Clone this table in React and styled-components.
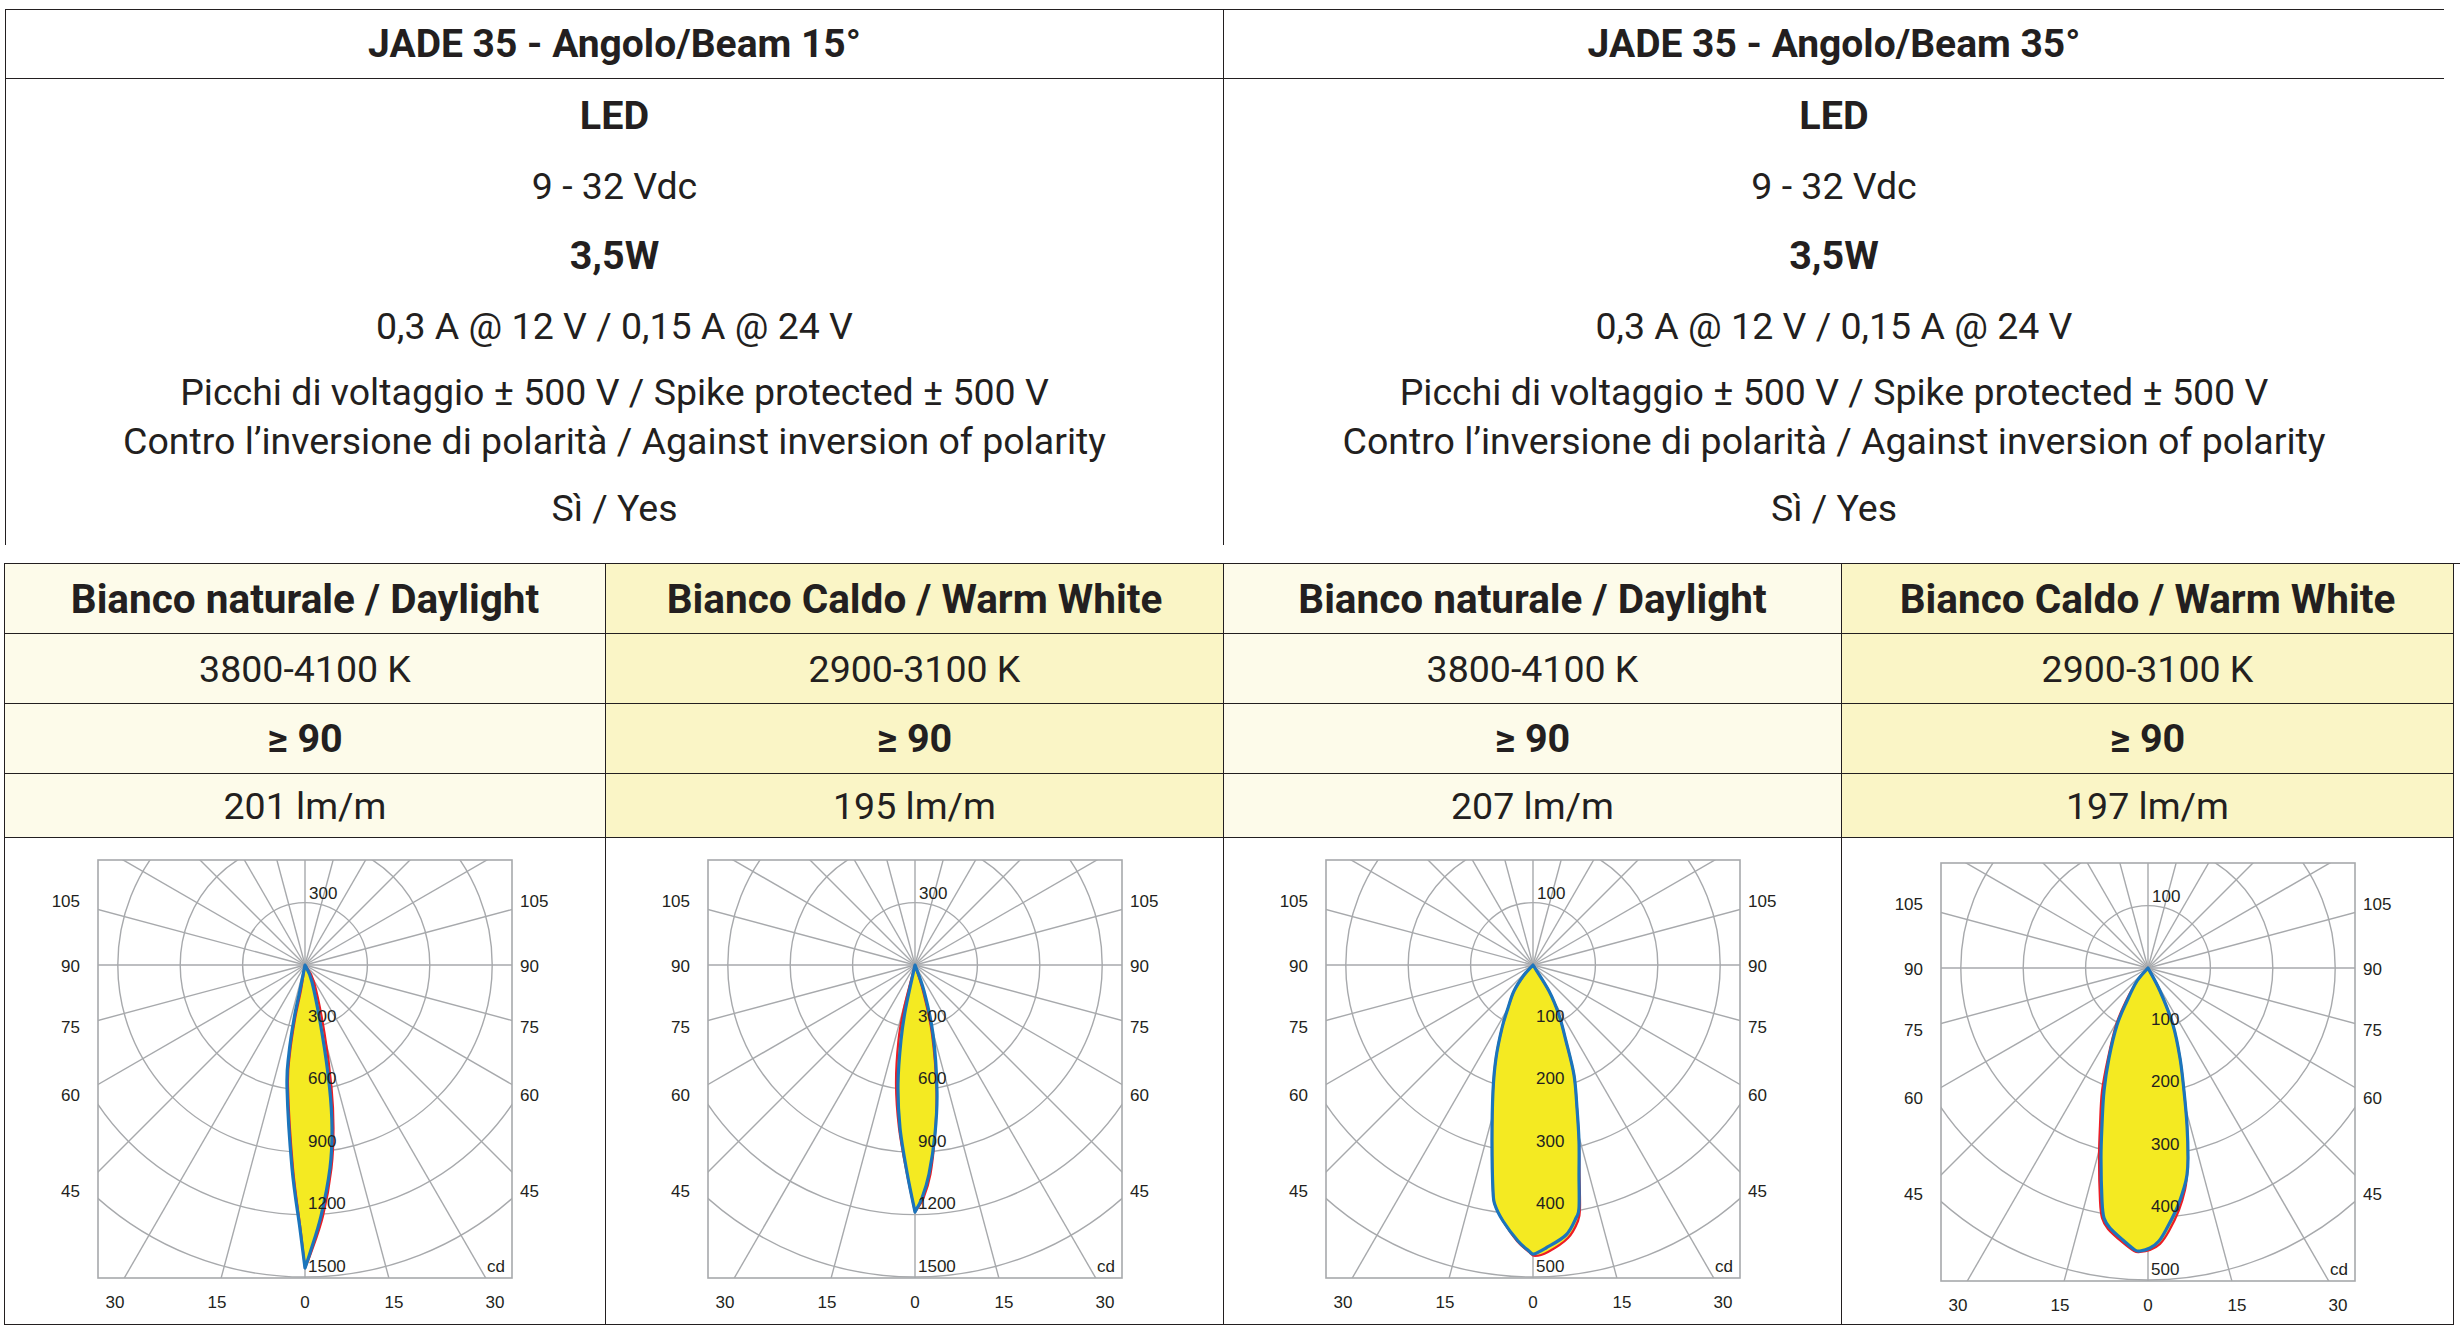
import React from 'react';
import styled, { createGlobalStyle } from 'styled-components';

const INK = '#231f20';
const GRID = '#a7a9ac';

const GlobalStyle = createGlobalStyle`
  body {
    margin: 0;
    background: #fff;
    color: ${INK};
    font-family: Roboto, 'Liberation Sans', sans-serif;
  }
`;

const Page = styled.div`
  width: 2460px;
  padding-top: 9px;
`;

const SpecTable = styled.div`
  display: grid;
  grid-template-columns: 1218px 1221px;
  margin-left: 5px;
`;

const SpecColumn = styled.section`
  display: flex;
  flex-direction: column;
  border-left: 1.5px solid ${INK};
  padding-bottom: 2px;
`;

const SpecTitle = styled.h2`
  margin: 0 0 2px;
  height: 70px;
  box-sizing: border-box;
  border-top: 1.5px solid ${INK};
  border-bottom: 1.5px solid ${INK};
  display: flex;
  align-items: center;
  justify-content: center;
  font-size: 39px;
  font-weight: 700;
`;

const SpecLine = styled.p`
  margin: 0;
  height: 70px;
  line-height: 70px;
  text-align: center;
  font-size: ${(p) => (p.$bold ? 39.5 : 37.5)}px;
  font-weight: ${(p) => (p.$bold ? 700 : 400)};
`;

const SpecPair = styled.div`
  padding: 7px 0;
  line-height: 49px;
  text-align: center;
  font-size: 37.5px;
`;

const ColorTable = styled.div`
  display: grid;
  grid-template-columns: 601px 618px 618px 612px;
  grid-template-rows: 70px 70px 70px 64px 487px;
  margin: 18px 0 0 4px;
  border-top: 1.5px solid ${INK};
  border-left: 1.5px solid ${INK};
`;

const ColorCell = styled.div`
  box-sizing: border-box;
  border-right: 1.5px solid ${INK};
  border-bottom: 1.5px solid ${INK};
  background: ${(p) => (p.$warm ? '#faf5c6' : '#fdfbea')};
  display: flex;
  align-items: center;
  justify-content: center;
  font-size: ${(p) => p.$size || 37.5}px;
  font-weight: ${(p) => (p.$bold ? 700 : 400)};
`;

const ChartCell = styled.div`
  box-sizing: border-box;
  border-right: 1.5px solid ${INK};
  border-bottom: 1.5px solid ${INK};
  display: flex;
  justify-content: center;
  padding-top: ${(p) => 10 + (p.$shift || 0)}px;
`;

const specs = [
  { title: 'JADE 35 - Angolo/Beam 15°' },
  { title: 'JADE 35 - Angolo/Beam 35°' },
];

// curve points in px relative to the polar origin
const charts = [
  {
    unit: 300,
    blue: [
      [[0, 0], [7, 17], [17, 68], [24.5, 122], [27, 163], [25, 203], [16, 251], [5, 288], [0, 303]],
      [[0, 303], [-5, 264], [-13, 203], [-18, 122], [-16, 88], [-11, 54], [-5, 25], [0, 0]],
    ],
    red: [
      [[0, 0], [9, 17], [19.5, 68], [26.5, 122], [28.5, 163], [26.5, 203], [18, 251], [6, 288], [0, 303]],
      [[0, 303], [-4.5, 264], [-12, 203], [-17, 122], [-15, 88], [-10, 54], [-4, 25], [0, 0]],
    ],
  },
  {
    unit: 300,
    blue: [
      [[0, 0], [9, 26], [18, 69], [22, 126], [20, 169], [14, 209], [7, 233], [0, 247]],
      [[0, 247], [-7.7, 209], [-15, 163], [-17, 119], [-14, 75], [-9.3, 43], [0, 0]],
    ],
    red: [
      [[0, 0], [8, 26], [17, 69], [21.5, 126], [20, 169], [15.5, 209], [8.5, 233], [0, 247]],
      [[0, 247], [-8, 209], [-16, 163], [-19, 119], [-16.5, 75], [-11, 43], [0, 0]],
    ],
  },
  {
    unit: 100,
    blue: [
      [[0, 0], [16, 26], [26, 50], [33, 76], [41, 110], [44, 143], [46, 176], [46, 210], [46, 243], [43, 253],
        [33, 270], [13, 283], [1, 289], [-4, 286], [-15, 276], [-30, 256], [-38, 240], [-40, 226], [-41, 176],
        [-40, 126], [-37, 93], [-31, 63], [-25, 43], [-19, 26], [-9, 10], [0, 0]],
    ],
    red: [
      [[0, 0], [16, 26], [26, 50], [33, 76], [41, 110], [44, 143], [46, 176], [46.5, 210], [47, 243], [45, 256],
        [35, 273], [15, 287], [2, 291], [-4, 287], [-16, 276], [-30, 256], [-38, 240], [-40, 226], [-41, 176],
        [-40, 126], [-37, 93], [-31, 63], [-25, 43], [-19, 26], [-9, 10], [0, 0]],
    ],
  },
  {
    unit: 100,
    shift: 3,
    blue: [
      [[0, 0], [12, 23], [25, 57], [32, 90], [36, 123], [39, 157], [40, 190], [39, 207], [36, 220], [29, 240],
        [19, 260], [11, 273], [2, 280], [-8, 283], [-13, 282], [-24, 273], [-38, 260], [-44, 250], [-46, 233],
        [-47, 190], [-46, 157], [-44, 123], [-39, 90], [-31, 57], [-21, 33], [-11, 13], [0, 0]],
    ],
    red: [
      [[0, 0], [12, 23], [25, 57], [32, 90], [36, 123], [39, 157], [40, 190], [39, 207], [37, 222], [31, 242],
        [21, 263], [12, 276], [2, 282], [-8, 284], [-14, 283], [-26, 274], [-40, 261], [-46, 250], [-48, 233],
        [-49, 190], [-48, 157], [-46, 123], [-40, 90], [-32, 57], [-22, 33], [-11, 13], [0, 0]],
    ],
  },
];

const columns = [
  { name: 'Bianco naturale / Daylight', kelvin: '3800-4100 K', flux: '201 lm/m' },
  { name: 'Bianco Caldo / Warm White', kelvin: '2900-3100 K', flux: '195 lm/m', warm: true },
  { name: 'Bianco naturale / Daylight', kelvin: '3800-4100 K', flux: '207 lm/m' },
  { name: 'Bianco Caldo / Warm White', kelvin: '2900-3100 K', flux: '197 lm/m', warm: true },
];

function smooth(pts, move = true) {
  let d = `${move ? 'M' : 'L'}${pts[0][0]},${pts[0][1]}`;
  for (let i = 0; i < pts.length - 1; i++) {
    const p0 = pts[i - 1] || pts[i];
    const p1 = pts[i];
    const p2 = pts[i + 1];
    const p3 = pts[i + 2] || p2;
    const c1 = [p1[0] + (p2[0] - p0[0]) / 6, p1[1] + (p2[1] - p0[1]) / 6];
    const c2 = [p2[0] - (p3[0] - p1[0]) / 6, p2[1] - (p3[1] - p1[1]) / 6];
    d += ` C${c1.join(',')} ${c2.join(',')} ${p2.join(',')}`;
  }
  return d;
}

const curvePath = (parts) => parts.map((p, i) => smooth(p, i === 0)).join(' ') + ' Z';

// svg layout
const W = 560;
const H = 476;
const FX = 73;
const FY = 12;
const FW = 414;
const FH = 418;
const CX = FX + FW / 2;
const CY = FY + 105;
const STEP = 62.4;

const sideLabels = [
  ['105', 41],
  ['90', 106],
  ['75', 167],
  ['60', 235],
  ['45', 331],
];
const bottomLabels = [
  ['30', -190],
  ['15', -88],
  ['0', 0],
  ['15', 89],
  ['30', 190],
];

function PolarChart({ chart, id }) {
  const rays = [];
  for (let a = 0; a < 360; a += 15) {
    const r = (a * Math.PI) / 180;
    rays.push(
      <line key={a} x1={CX} y1={CY} x2={CX + 700 * Math.sin(r)} y2={CY + 700 * Math.cos(r)} />
    );
  }
  const labelStyle = { fontFamily: "'Liberation Sans', Arial, sans-serif", fontSize: 17, fill: INK };
  return (
    <svg width={W} height={H} viewBox={`0 0 ${W} ${H}`}>
      <defs>
        <clipPath id={`frame-${id}`}>
          <rect x={FX} y={FY} width={FW} height={FH} />
        </clipPath>
      </defs>
      <g clipPath={`url(#frame-${id})`} stroke={GRID} strokeWidth="1.4" fill="none">
        {[1, 2, 3, 4, 5].map((k) => (
          <circle key={k} cx={CX} cy={CY} r={STEP * k} />
        ))}
        {rays}
      </g>
      <rect x={FX} y={FY} width={FW} height={FH} fill="none" stroke={GRID} strokeWidth="1.6" />
      <g transform={`translate(${CX} ${CY})`}>
        <path d={curvePath(chart.red)} fill="#f4ea22" stroke="none" />
        <path d={curvePath(chart.blue)} fill="#f4ea22" stroke="none" />
        <path d={curvePath(chart.red)} fill="none" stroke="#ed1c24" strokeWidth="2.2" strokeLinejoin="round" />
        <path d={curvePath(chart.blue)} fill="none" stroke="#1b75bc" strokeWidth="3.2" strokeLinejoin="round" />
      </g>
      <g style={labelStyle} dominantBaseline="central">
        <text x={CX + 4} y={CY - 72}>{chart.unit}</text>
        {[1, 2, 3, 4, 5].map((k) => (
          <text key={k} x={CX + 3} y={CY + STEP * k - 11}>
            {chart.unit * k}
          </text>
        ))}
        {sideLabels.map(([t, y]) => (
          <React.Fragment key={t}>
            <text x={FX - 18} y={FY + y} textAnchor="end">{t}</text>
            <text x={FX + FW + 8} y={FY + y}>{t}</text>
          </React.Fragment>
        ))}
        {bottomLabels.map(([t, x], i) => (
          <text key={i} x={CX + x} y={FY + FH + 24} textAnchor="middle">{t}</text>
        ))}
        <text x={FX + FW - 7} y={FY + FH - 12} textAnchor="end">cd</text>
      </g>
    </svg>
  );
}

export default function App() {
  return (
    <Page>
      <GlobalStyle />
      <SpecTable>
        {specs.map((s) => (
          <SpecColumn key={s.title}>
            <SpecTitle>{s.title}</SpecTitle>
            <SpecLine $bold>LED</SpecLine>
            <SpecLine>9 - 32 Vdc</SpecLine>
            <SpecLine $bold>3,5W</SpecLine>
            <SpecLine>0,3 A @ 12 V / 0,15 A @ 24 V</SpecLine>
            <SpecPair>
              Picchi di voltaggio ± 500 V / Spike protected ± 500 V
              <br />
              Contro l’inversione di polarità / Against inversion of polarity
            </SpecPair>
            <SpecLine>Sì / Yes</SpecLine>
          </SpecColumn>
        ))}
      </SpecTable>
      <ColorTable>
        {columns.map((c, i) => (
          <ColorCell key={`n${i}`} $warm={c.warm} $bold $size={40.5}>{c.name}</ColorCell>
        ))}
        {columns.map((c, i) => (
          <ColorCell key={`k${i}`} $warm={c.warm}>{c.kelvin}</ColorCell>
        ))}
        {columns.map((c, i) => (
          <ColorCell key={`r${i}`} $warm={c.warm} $bold $size={39.5}>≥ 90</ColorCell>
        ))}
        {columns.map((c, i) => (
          <ColorCell key={`f${i}`} $warm={c.warm}>{c.flux}</ColorCell>
        ))}
        {charts.map((ch, i) => (
          <ChartCell key={`c${i}`} $shift={ch.shift}>
            <PolarChart chart={ch} id={i} />
          </ChartCell>
        ))}
      </ColorTable>
    </Page>
  );
}
